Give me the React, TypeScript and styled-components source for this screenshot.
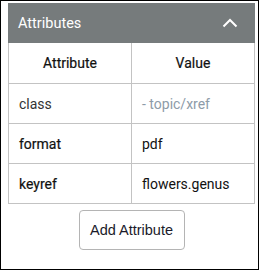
import styled, { createGlobalStyle } from 'styled-components'

const GlobalStyle = createGlobalStyle`
  body {
    margin: 0;
    font-family: Roboto, "Liberation Sans", sans-serif;
  }
`

const rows = [
  { name: 'class', value: '- topic/xref', inherited: true },
  { name: 'format', value: 'pdf', inherited: false },
  { name: 'keyref', value: 'flowers.genus', inherited: false },
]

const ChevronUp = () => (
  <svg width="16" height="10" viewBox="0 0 16 10" fill="none">
    <path d="M1.5 8.5 L8 2 L14.5 8.5" stroke="#fff" strokeWidth="2" />
  </svg>
)

const App = () => {
  return (
    <Frame>
      <GlobalStyle />
      <Panel>
        <PanelHeader>
          <Title>Attributes</Title>
          <ChevronUp />
        </PanelHeader>
        <Table>
          <thead>
            <tr>
              <Th>Attribute</Th>
              <Th>Value</Th>
            </tr>
          </thead>
          <tbody>
            {rows.map((r) => (
              <tr key={r.name}>
                <NameCell $inherited={r.inherited}>{r.name}</NameCell>
                <ValueCell $inherited={r.inherited}>{r.value}</ValueCell>
              </tr>
            ))}
          </tbody>
        </Table>
        <ButtonRow>
          <AddButton>Add Attribute</AddButton>
        </ButtonRow>
      </Panel>
    </Frame>
  )
}

export default App

const Frame = styled.div`
  box-sizing: border-box;
  width: 259px;
  height: 270px;
  border: 1px solid #000;
  padding: 2px 3px 0 7px;
  background: #fff;
`

const Panel = styled.div`
  width: 247px;
`

const PanelHeader = styled.div`
  height: 40px;
  background: #767b7c;
  display: flex;
  align-items: center;
  justify-content: space-between;
  padding: 0 17px 0 10px;
`

const Title = styled.span`
  color: #fff;
  font-size: 14.5px;
`

const Table = styled.table`
  width: 247px;
  border-collapse: collapse;
  table-layout: fixed;
  font-size: 14px;
  color: #222;
`

// medium weight: the regular face thickened a little
const Th = styled.th`
  height: 40px;
  border: 1px solid #c3c3c3;
  border-top: none;
  font-weight: 400;
  -webkit-text-stroke: 0.2px #111;
  color: #111;
  text-align: center;
  padding: 0;
`

const NameCell = styled.td<{ $inherited: boolean }>`
  height: 39px;
  border: 1px solid #c3c3c3;
  padding: 0 10px;
  color: ${(p) => (p.$inherited ? '#333' : '#111')};
  -webkit-text-stroke: ${(p) => (p.$inherited ? '0' : '0.2px #111')};
`

const ValueCell = styled.td<{ $inherited: boolean }>`
  height: 39px;
  border: 1px solid #c3c3c3;
  padding: 0 10px;
  color: ${(p) => (p.$inherited ? '#8d9ba8' : '#111')};
`

const ButtonRow = styled.div`
  display: flex;
  justify-content: center;
  padding-top: 6px;
`

const AddButton = styled.button`
  width: 106px;
  height: 40px;
  background: #fff;
  border: 1px solid #b4b4b4;
  border-radius: 4px;
  font-family: "Liberation Sans", Arial, sans-serif;
  font-size: 14.5px;
  color: #1a1a2a;
  padding: 0;
`
